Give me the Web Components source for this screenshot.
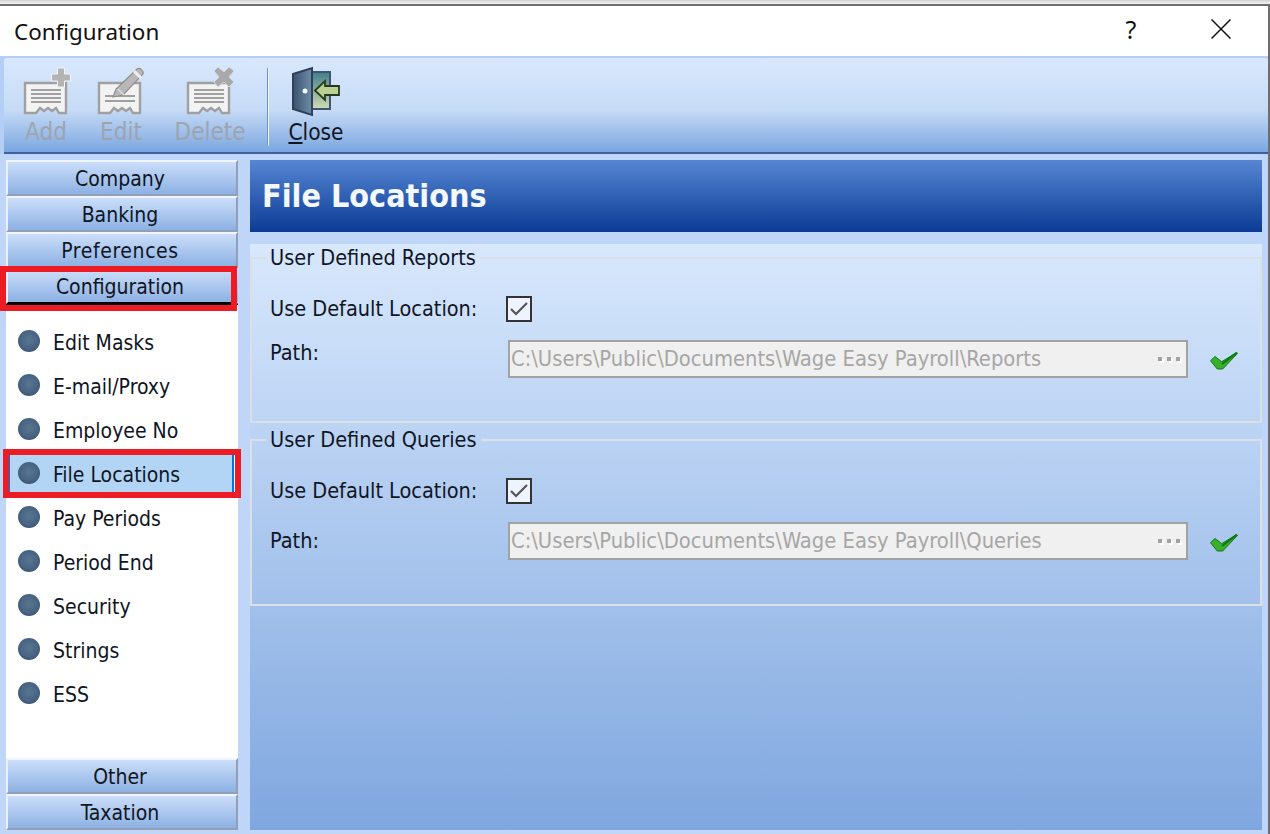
<!DOCTYPE html>
<html>
<head>
<meta charset="utf-8">
<title>Configuration</title>
<style>
  html, body { margin: 0; padding: 0; }
  body {
    width: 1270px;
    height: 834px;
    overflow: hidden;
    font-family: "DejaVu Sans", sans-serif;
    font-stretch: condensed;
    color: #10151f;
  }
</style>
</head>
<body>
<cfg-window>
  <cfg-titlebar title-text="Configuration"></cfg-titlebar>
  <cfg-toolbar>
    <tool-button width="42" disabled><tool-icon slot="icon" name="add"></tool-icon>Add</tool-button>
    <tool-button width="42" disabled><tool-icon slot="icon" name="edit"></tool-icon>Edit</tool-button>
    <tool-button width="70" disabled><tool-icon slot="icon" name="delete"></tool-icon>Delete</tool-button>
    <tool-sep></tool-sep>
    <tool-button width="54"><tool-icon slot="icon" name="close"></tool-icon><u>C</u>lose</tool-button>
  </cfg-toolbar>
  <cfg-body>
    <nav-bar slot="nav">
      <nav-header>Company</nav-header>
      <nav-header>Banking</nav-header>
      <nav-header style="letter-spacing:.6px">Preferences</nav-header>
      <nav-header active>Configuration</nav-header>
      <nav-list>
        <nav-item>Edit Masks</nav-item>
        <nav-item>E-mail/Proxy</nav-item>
        <nav-item>Employee No</nav-item>
        <nav-item selected>File Locations</nav-item>
        <nav-item>Pay Periods</nav-item>
        <nav-item>Period End</nav-item>
        <nav-item>Security</nav-item>
        <nav-item>Strings</nav-item>
        <nav-item>ESS</nav-item>
      </nav-list>
      <nav-header>Other</nav-header>
      <nav-header>Taxation</nav-header>
    </nav-bar>
    <cfg-panel heading="File Locations">
      <path-group legend="User Defined Reports" height="178" label-lift="13" path="C:\Users\Public\Documents\Wage Easy Payroll\Reports"></path-group>
      <path-group legend="User Defined Queries" height="179" label-lift="2" path="C:\Users\Public\Documents\Wage Easy Payroll\Queries"></path-group>
    </cfg-panel>
  </cfg-body>
</cfg-window>

<script>
// Small helper: every element gets an open shadow root from a string
class ShadowElement extends HTMLElement {
  constructor() {
    super();
    this.attachShadow({ mode: 'open' });
  }
  render(html) {
    this.shadowRoot.innerHTML = html;
  }
}

class CfgWindow extends ShadowElement {
  connectedCallback() {
    this.render(`
      <style>
        :host {
          display: flex;
          flex-direction: column;
          box-sizing: border-box;
          width: 1270px;
          height: 834px;
          padding-top: 4px;
          background: linear-gradient(#d4d4d4, #f2f2f2 4px, transparent 4px);
        }
        .frame {
          flex: 1;
          display: flex;
          flex-direction: column;
          min-height: 0;
          border-top: 2px solid #6e6e6e;
          border-right: 2px solid #6e6e6e;
          background: #bfd6f8;
        }
      </style>
      <div class="frame"><slot></slot></div>
    `);
  }
}

class CfgTitlebar extends ShadowElement {
  connectedCallback() {
    this.render(`
      <style>
        :host {
          display: flex;
          align-items: center;
          height: 50px;
          padding-left: 14px;
          background: #fff;
          color: #111;
          font-family: "Noto Sans", sans-serif;
          font-stretch: normal;
          font-size: 22.4px;
        }
        .title { flex: 1; }
        .help { width: 20px; margin-right: 70px; text-align: center; font-size: 25px; margin-top: -4px; }
        svg { display: block; margin-right: 37px; margin-top: -4px; }
      </style>
      <span class="title">${this.getAttribute('title-text')}</span>
      <span class="help">?</span>
      <svg width="20" height="20" viewBox="0 0 20 20"><path d="M.5 .5L19.5 19.5M19.5 .5L.5 19.5" stroke="#111" stroke-width="1.5" fill="none"/></svg>
    `);
  }
}

class CfgToolbar extends ShadowElement {
  connectedCallback() {
    this.render(`
      <style>
        :host {
          display: block;
          height: 98px;
          box-sizing: border-box;
          padding: 2px 0 0 4px;
          background: #b4cff6;
        }
        .bar {
          display: flex;
          align-items: stretch;
          gap: 33px;
          box-sizing: border-box;
          height: 96px;
          padding: 8px 0 0 21px;
          border-radius: 3px 3px 0 0;
          border-bottom: 2px solid #3f5f9e;
          background: linear-gradient(#d9e8fd 0, #c6dbf6 55%, #7ba6e0 100%);
        }
      </style>
      <div class="bar"><slot></slot></div>
    `);
  }
}

class ToolButton extends ShadowElement {
  connectedCallback() {
    const w = this.getAttribute('width');
    this.render(`
      <style>
        :host {
          display: flex;
          flex-direction: column;
          align-items: center;
          width: ${w}px;
          font-size: 22.5px;
          line-height: 28px;
          white-space: nowrap;
          color: #10151f;
        }
        :host([disabled]) { color: #9da4ae; font-size: 24px; }
        .icon { display: block; height: 50px; margin-bottom: 2px; }
      </style>
      <div class="icon"><slot name="icon"></slot></div>
      <span><slot></slot></span>
    `);
  }
}

class ToolSep extends ShadowElement {
  connectedCallback() {
    this.render(`
      <style>
        :host {
          display: block;
          width: 1px;
          height: 78px;
          margin: 2px -13px 0 -11px;
          background: #6f93d0;
          border-right: 1px solid #eef5ff;
        }
      </style>
    `);
  }
}

// Toolbar pictures, all drawn in a 50x50 box
const DOC = (x, lines) => `
  <path d="M${x} 17H${x + 41}V47H${x + 34}l-3-5-4 3-4-3-4 3-4-3-4 5H${x}Z" fill="#f3f3f3" stroke="#a0a0a0" stroke-width="2.4"/>
  ${lines.map(y => `<path d="M${x + 6} ${y}H${x + 36}" stroke="#a0a0a0" stroke-width="2"/>`).join('')}
`;
const ICONS = {
  add: `${DOC(4, [24, 28, 32, 36])}
    <path d="M30.500 8h6V2h7v6h6v7h-6v6h-7v-6h-6Z" fill="#b4b4b4" stroke="#f2f5fa" stroke-width="1"/>`,
  edit: `${DOC(3, [30, 35])}
    <path d="M17 31l3-8L41 3c3-2 7 2 6 5L27 29Z" fill="#b8b8b8" stroke="#8f8f8f" stroke-width="1.2"/>
    <path d="M38 5l7 7" stroke="#efefef" stroke-width="3"/>
    <path d="M22 23l6 6" stroke="#dcdcdc" stroke-width="1.5"/>`,
  delete: `${DOC(3, [24, 28, 32, 36])}
    <path d="M29 5l4-4 6 5 5-5 5 4-5 6 5 5-5 5-5-5-6 5-4-5 5-5Z" fill="#a9a9a9" stroke="#d4dbe6" stroke-width="1"/>`,
  close: `
    <defs>
      <linearGradient id="glass" x1="0" y1="0" x2="0" y2="1"><stop offset="0" stop-color="#3f7f8a"/><stop offset="1" stop-color="#d2dcb2"/></linearGradient>
      <linearGradient id="door" x1="0" y1="0" x2="1" y2="0"><stop offset="0" stop-color="#3a536f"/><stop offset="1" stop-color="#6f8da6"/></linearGradient>
    </defs>
    <rect x="21" y="6" width="18" height="37" fill="url(#glass)" stroke="#3e5472" stroke-width="2"/>
    <path d="M2 8L21 2V49L2 43Z" fill="url(#door)" stroke="#2f405c" stroke-width="2"/>
    <circle cx="14" cy="25" r="2.500" fill="#f2f8fd"/>
    <path d="M24 24.500L34 15V20H48V29H34V34Z" fill="#b9d193" stroke="#27391c" stroke-width="1.800"/>`
};

class ToolIcon extends ShadowElement {
  connectedCallback() {
    this.render(`
      <style>
        :host { display: block; width: 50px; height: 50px; }
        svg { display: block; overflow: visible; }
      </style>
      <svg width="50" height="50" viewBox="0 0 50 50">${ICONS[this.getAttribute('name')]}</svg>
    `);
  }
}

class CfgBody extends ShadowElement {
  connectedCallback() {
    this.render(`
      <style>
        :host {
          flex: 1;
          display: flex;
          gap: 12px;
          min-height: 0;
          padding: 6px 6px 4px 6px;
        }
      </style>
      <slot name="nav"></slot>
      <slot></slot>
    `);
  }
}

class NavBar extends ShadowElement {
  connectedCallback() {
    this.render(`
      <style>
        :host {
          display: flex;
          flex-direction: column;
          flex: none;
          width: 232px;
        }
      </style>
      <slot></slot>
    `);
  }
}

class NavHeader extends ShadowElement {
  connectedCallback() {
    this.render(`
      <style>
        :host {
          position: relative;
          display: flex;
          align-items: center;
          justify-content: center;
          flex: none;
          box-sizing: border-box;
          height: 36px;
          padding: 2px 4px 0 0;
          font-size: 21px;
          border-top: 2px solid #f0f6ff;
          border-left: 2px solid #e8f1fe;
          border-right: 2px solid #929fb6;
          border-bottom: 2px solid #929fb6;
          background: linear-gradient(#cbdefa, #8db1e3);
        }
        :host([active]) {
          border-right-color: transparent;
          border-bottom-color: #000;
          box-shadow: 0 1px 0 #000;
        }
        :host([active])::after {
          content: "";
          position: absolute;
          left: -8px;
          right: -1px;
          top: -4px;
          bottom: -9px;
          border: 6px solid #ed1c24;
        }
      </style>
      <slot></slot>
    `);
  }
}

class NavList extends ShadowElement {
  connectedCallback() {
    this.render(`
      <style>
        :host {
          flex: 1;
          display: block;
          padding-top: 16px;
          background: #fff;
        }
      </style>
      <slot></slot>
    `);
  }
}

class NavItem extends ShadowElement {
  connectedCallback() {
    this.render(`
      <style>
        :host {
          position: relative;
          display: flex;
          align-items: center;
          gap: 13px;
          box-sizing: border-box;
          height: 44px;
          padding: 2px 0 0 12px;
          font-size: 21px;
        }
        .bullet {
          flex: none;
          width: 22px;
          height: 22px;
          margin-top: -4px;
          border-radius: 50%;
          background: radial-gradient(circle at 50% 45%, #587590 0, #486484 55%, #2f4058 100%);
          z-index: 1;
        }
        .text { z-index: 1; }
        :host([selected])::before {
          content: "";
          position: absolute;
          left: 3px;
          right: 4px;
          top: 3px;
          bottom: 4px;
          background: #b3d5f5;
          border-left: 1px solid #0078d7;
          border-right: 2px solid #0078d7;
        }
        :host([selected])::after {
          content: "";
          position: absolute;
          z-index: 2;
          left: -3px;
          right: -3px;
          top: -3px;
          bottom: -2px;
          border: 6px solid #ed1c24;
        }
      </style>
      <span class="bullet"></span>
      <span class="text"><slot></slot></span>
    `);
  }
}

class CfgPanel extends ShadowElement {
  connectedCallback() {
    this.render(`
      <style>
        :host {
          flex: 1;
          display: flex;
          flex-direction: column;
          min-width: 0;
        }
        h1 {
          margin: 0;
          height: 72px;
          display: flex;
          align-items: center;
          padding-left: 12px;
          font-size: 32px;
          font-weight: bold;
          color: #f4f8ff;
          background: linear-gradient(#5686d3, #0b3b95);
        }
        .body {
          flex: 1;
          margin-top: 12px;
          padding-top: 1px;
          background: linear-gradient(#d8e8fd, #7fa7df);
        }
      </style>
      <h1>${this.getAttribute('heading')}</h1>
      <div class="body"><slot></slot></div>
    `);
  }
}

class PathGroup extends ShadowElement {
  connectedCallback() {
    this.render(`
      <style>
        :host { display: block; margin-bottom: 4px; font-size: 21.5px; }
        fieldset {
          box-sizing: border-box;
          height: ${this.getAttribute('height')}px;
          margin: 0;
          padding: 0 0 0 18px;
          border: 2px solid #dcdfe3;
        }
        legend { margin-left: -4px; padding: 0 4px; line-height: 26px; }
        .row { display: flex; align-items: center; }
        .label { width: 236px; flex: none; box-sizing: border-box; padding-bottom: 2px; }
        .path .label { padding-bottom: ${this.getAttribute('label-lift')}px; }
        .use { height: 40px; margin-top: 18px; }
        .path { height: 38px; margin-top: 11px; }
        .box {
          width: 26px;
          height: 26px;
          box-sizing: border-box;
          border: 2px solid #333;
          background: #eef4fd;
          display: flex;
          align-items: center;
          justify-content: center;
        }
        .field {
          flex: none;
          box-sizing: border-box;
          width: 680px;
          height: 38px;
          margin-left: 2px;
          padding: 0 6px 0 1px;
          border: 2px solid #a2a2a2;
          background: #f0f0f0;
          color: #a6a6a6;
          font-size: 21.75px;
          display: flex;
          align-items: center;
          white-space: nowrap;
        }
        .field span { flex: 1; padding-bottom: 2px; }
        .dots { display: flex; gap: 5px; }
        .dots i { width: 4px; height: 4px; background: #a2a2a2; box-shadow: 2px 2px 0 #fff; }
        .ok { display: block; margin: 4px 0 0 22px; }
      </style>
      <fieldset>
        <legend>${this.getAttribute('legend')}</legend>
        <div class="row use">
          <span class="label">Use Default Location:</span>
          <span class="box">
            <svg width="18" height="14" viewBox="0 0 18 14"><path d="M1 7l5 5L17 1" stroke="#555" stroke-width="2.200" fill="none"/></svg>
          </span>
        </div>
        <div class="row path">
          <span class="label">Path:</span>
          <div class="field">
            <span>${this.getAttribute('path')}</span>
            <div class="dots"><i></i><i></i><i></i></div>
          </div>
          <svg class="ok" width="28" height="18" viewBox="0 0 28 18">
            <path d="M.5 8.700L5 4.500L11.700 9.700L26.700 .5L27.500 1.300L12.700 17H7.300Z" fill="#3bae2c" stroke="#0b7a12" stroke-width="1"/>
            <path d="M12 12L26.700 .8" stroke="#0b7a12" stroke-width="2"/>
          </svg>
        </div>
      </fieldset>
    `);
  }
}

customElements.define('cfg-window', CfgWindow);
customElements.define('cfg-titlebar', CfgTitlebar);
customElements.define('cfg-toolbar', CfgToolbar);
customElements.define('tool-button', ToolButton);
customElements.define('tool-sep', ToolSep);
customElements.define('tool-icon', ToolIcon);
customElements.define('cfg-body', CfgBody);
customElements.define('nav-bar', NavBar);
customElements.define('nav-header', NavHeader);
customElements.define('nav-list', NavList);
customElements.define('nav-item', NavItem);
customElements.define('cfg-panel', CfgPanel);
customElements.define('path-group', PathGroup);
</script>
</body>
</html>
